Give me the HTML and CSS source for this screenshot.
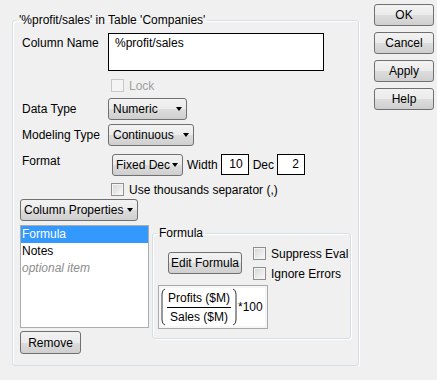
FILE: index.html
```html
<!DOCTYPE html>
<html lang="en">
<head>
    <meta charset="UTF-8">
    <title>Column Info</title>
    <link rel="stylesheet" href="styles.css">
</head>
<body>
    <div class="dialog">
        <fieldset class="column-box">
            <legend>'%profit/sales' in Table 'Companies'</legend>

            <div class="name-row">
                <div class="field-label">Column Name</div>
                <div class="name-box">%profit/sales</div>
            </div>

            <div class="check-row lock-row disabled">
                <span class="checkbox"></span>
                <span>Lock</span>
            </div>

            <div class="field-row type-row">
                <div class="field-label">Data Type</div>
                <div class="dropdown numeric">Numeric<span class="arrow"></span></div>
            </div>

            <div class="field-row modeling-row">
                <div class="field-label">Modeling Type</div>
                <div class="dropdown continuous">Continuous<span class="arrow"></span></div>
            </div>

            <div class="field-row format-row">
                <div class="field-label format-label">Format</div>
                <div class="dropdown fixed-dec">Fixed Dec<span class="arrow"></span></div>
                <span class="inline-label">Width</span>
                <div class="num-box">10</div>
                <span class="inline-label">Dec</span>
                <div class="num-box">2</div>
            </div>

            <div class="check-row thousands-row">
                <span class="checkbox"></span>
                <span>Use thousands separator (,)</span>
            </div>

            <div class="dropdown col-props">Column Properties<span class="arrow"></span></div>

            <div class="props-body">
                <div class="props-left">
                    <div class="prop-list">
                        <div class="prop-item selected">Formula</div>
                        <div class="prop-item">Notes</div>
                        <div class="prop-item optional">optional item</div>
                    </div>
                    <button class="btn remove-btn">Remove</button>
                </div>

                <fieldset class="formula-box">
                    <legend>Formula</legend>
                    <div class="formula-top">
                        <button class="btn edit-btn">Edit Formula</button>
                        <div class="formula-checks">
                            <div class="check-row">
                                <span class="checkbox"></span>
                                <span>Suppress Eval</span>
                            </div>
                            <div class="check-row">
                                <span class="checkbox"></span>
                                <span>Ignore Errors</span>
                            </div>
                        </div>
                    </div>
                    <div class="formula-view">
                        <svg class="paren" width="5" height="38" viewBox="0 0 5 38">
                            <path d="M4 1 Q1 2 1 6 L1 32 Q1 36 4 37" fill="none" stroke="#333" stroke-width="1"/>
                        </svg>
                        <div class="fraction">
                            <div class="numer">Profits ($M)</div>
                            <div class="denom">Sales ($M)</div>
                        </div>
                        <svg class="paren" width="5" height="38" viewBox="0 0 5 38">
                            <path d="M1 1 Q4 2 4 6 L4 32 Q4 36 1 37" fill="none" stroke="#333" stroke-width="1"/>
                        </svg>
                        <span class="times">*100</span>
                    </div>
                </fieldset>
            </div>
        </fieldset>

        <div class="actions">
            <button class="btn">OK</button>
            <button class="btn">Cancel</button>
            <button class="btn">Apply</button>
            <button class="btn">Help</button>
        </div>
    </div>
</body>
</html>
```

FILE: styles.css
```css
body {
    margin: 0;
    background-color: #f0f0f0;
    font-family: "Liberation Sans", Arial, sans-serif;
    font-size: 12px;
    color: #000;
}

.dialog {
    display: flex;
    align-items: flex-start;
    padding-left: 12px;
}

fieldset {
    margin: 0;
    min-width: 0;
    box-sizing: border-box;
    border: 1px solid #d5dfe5;
    border-radius: 3px;
    box-shadow: 1px 1px 0 #fff, inset 1px 1px 0 #fff;
}

legend {
    line-height: 14px;
    padding: 0 2px;
    white-space: nowrap;
}

.column-box {
    margin-top: 13px;
    width: 347px;
    height: 353px;
    padding: 0 7px;
}

.column-box > legend {
    margin-left: -3px;
}

.field-label {
    width: 86px;
    padding-left: 2px;
    line-height: 14px;
    flex-shrink: 0;
}

/* column name */
.name-row {
    display: flex;
    margin-top: 6px;
}

.name-row .field-label {
    padding-top: 3px;
}

.name-box {
    width: 216px;
    height: 38px;
    box-sizing: border-box;
    border: 1px solid #000;
    background-color: #fff;
    padding: 2px 6px;
    line-height: 14px;
}

/* checkboxes */
.check-row {
    display: flex;
    align-items: center;
    height: 13px;
    gap: 5px;
    white-space: nowrap;
}

.checkbox {
    width: 11px;
    height: 11px;
    border: 1px solid #8f8f8f;
    background: linear-gradient(135deg, #d6d6d6, #f9f9f9);
    box-shadow: inset 0 0 0 1px #f4f4f4;
    flex-shrink: 0;
}

.disabled {
    color: #a0a0a0;
}

.disabled .checkbox {
    border-color: #c8c8c8;
    background: #f4f4f4;
    box-shadow: none;
}

.lock-row {
    margin-top: 8px;
    padding-left: 91px;
}

.thousands-row {
    margin-top: 7px;
    padding-left: 91px;
}

/* drop downs */
.field-row {
    display: flex;
    align-items: flex-start;
}

.type-row {
    margin-top: 6px;
}

.field-row .field-label {
    line-height: 22px;
}

.modeling-row {
    margin-top: 4px;
}

.format-row {
    margin-top: 8px;
}

.field-row .format-label {
    line-height: 14px;
}

.dropdown {
    position: relative;
    height: 22px;
    box-sizing: border-box;
    border: 1px solid #707070;
    border-radius: 3px;
    background: linear-gradient(#f2f2f2 0%, #ebebeb 50%, #dddddd 50%, #cfcfcf 100%);
    padding-left: 4px;
    line-height: 20px;
    white-space: nowrap;
}

.arrow {
    position: absolute;
    right: 4px;
    top: 8px;
    width: 0;
    height: 0;
    border-left: 3.5px solid transparent;
    border-right: 3.5px solid transparent;
    border-top: 4px solid #000;
}

.numeric {
    width: 79px;
}

.continuous {
    width: 86px;
}

.fixed-dec {
    width: 71px;
    margin-left: 4px;
    padding-left: 3px;
}

.col-props {
    width: 118px;
    margin-top: 3px;
    padding-left: 3px;
}

.inline-label {
    line-height: 22px;
    margin-left: 4px;
    margin-right: 3px;
}

.num-box {
    width: 28px;
    height: 21px;
    box-sizing: border-box;
    border: 1px solid #000;
    background-color: #fff;
    text-align: right;
    padding-right: 5px;
    line-height: 18px;
}

/* column properties */
.props-body {
    display: flex;
    align-items: flex-start;
    margin-top: 4px;
}

.props-left {
    display: flex;
    flex-direction: column;
    align-items: flex-start;
}

.prop-list {
    width: 129px;
    height: 103px;
    box-sizing: border-box;
    border: 1px solid #acacac;
    background-color: #fff;
}

.prop-item {
    height: 17px;
    line-height: 17px;
    padding-left: 1px;
}

.prop-item.selected {
    background-color: #3399ff;
    color: #fff;
}

.prop-item.optional {
    color: #8d8d8d;
    font-style: italic;
}

.btn {
    font-family: inherit;
    font-size: 12px;
    color: #000;
    height: 22px;
    padding: 0;
    box-sizing: border-box;
    border: 1px solid #707070;
    border-radius: 3px;
    background: linear-gradient(#f2f2f2 0%, #ebebeb 50%, #dddddd 50%, #cfcfcf 100%);
    white-space: nowrap;
}

.remove-btn {
    width: 61px;
    height: 23px;
    margin-top: 3px;
}

.formula-box {
    width: 199px;
    height: 113px;
    margin-left: 3px;
    margin-top: 1px;
    padding: 0 5px;
}

.formula-box > legend {
    margin-left: -1px;
}

.formula-top {
    display: flex;
    align-items: flex-start;
    margin-top: 7px;
}

.edit-btn {
    width: 74px;
    margin-top: 5px;
    margin-left: 10px;
    flex-shrink: 0;
}

.formula-checks {
    display: flex;
    flex-direction: column;
    gap: 7px;
    margin-left: 11px;
}

.formula-view {
    display: flex;
    align-items: center;
    width: 110px;
    height: 44px;
    box-sizing: border-box;
    margin-top: 5px;
    border: 1px solid #a9a9a9;
    background-color: #fff;
    box-shadow: inset 0 0 0 2px #f6f6f6;
    padding-left: 2px;
}

.fraction {
    display: flex;
    flex-direction: column;
    align-items: center;
    margin: 0 1px;
}

.numer {
    line-height: 16px;
    padding: 0 1px 1px;
    border-bottom: 1px solid #000;
}

.denom {
    line-height: 16px;
    padding-top: 1px;
}

.times {
    margin-left: 1px;
}

/* right buttons */
.actions {
    display: flex;
    flex-direction: column;
    gap: 6px;
    margin-top: 4px;
    margin-left: 15px;
}

.actions .btn {
    width: 60px;
}
```
